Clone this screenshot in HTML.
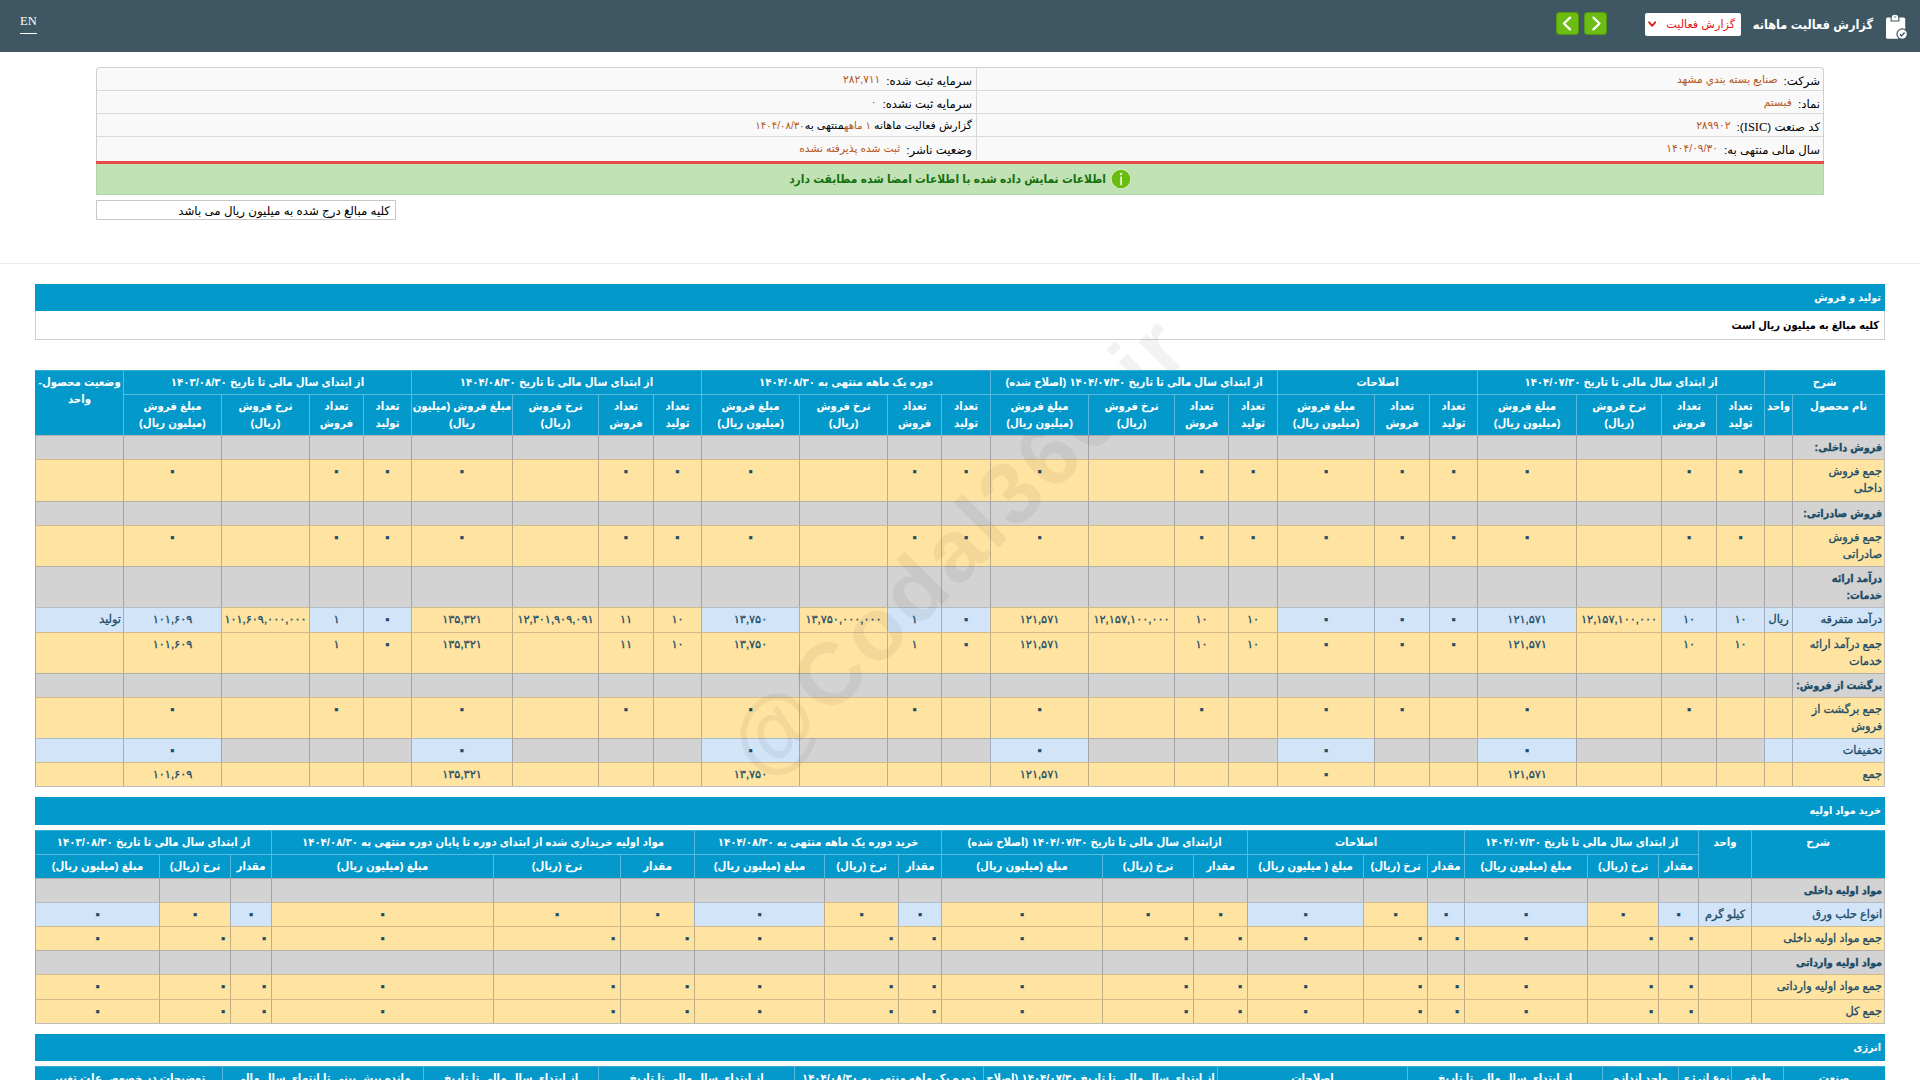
<!DOCTYPE html>
<html lang="fa">
<head>
<meta charset="utf-8">
<title>گزارش فعالیت ماهانه</title>
<style>
*{box-sizing:border-box}
html,body{margin:0;padding:0}
body{width:1920px;height:1080px;overflow:hidden;background:#fff;position:relative;font-family:"Liberation Sans","DejaVu Sans",sans-serif;font-size:11px;color:#000}
.abs{position:absolute}
#top{left:0;top:0;width:1920px;height:52px;background:#3e5763}
#en{left:20px;top:14px;color:#fff;font-family:"Liberation Serif","DejaVu Serif",serif;font-size:12.5px;line-height:15px;padding-bottom:4px;border-bottom:1px solid #fff}
#title{right:47px;top:13px;height:24px;line-height:24px;color:#fff;font-weight:bold;font-size:12.6px;font-family:"Liberation Sans","DejaVu Sans Condensed","DejaVu Sans",sans-serif;white-space:nowrap;direction:rtl}
#sel{left:1645px;top:13px;width:96px;height:23px;background:#fff;border-radius:2px;color:#e81313;font-size:11.2px;line-height:22px;direction:rtl;padding-right:6px;white-space:nowrap}
.nav{top:12px;width:23px;height:23px;background:#6bbd14;border-radius:4px;box-shadow:inset 0 0 0 1px rgba(50,110,10,0.45)}
#info{left:96px;top:67px;width:1728px;height:95px;border:1px solid #cfcfcf;border-bottom:none;border-radius:4px 4px 0 0;background:#f9f9f9}
.irow{position:absolute;left:0;width:1726px;height:23px;border-bottom:1px solid #d9d9d9;direction:rtl;font-size:11.7px;line-height:22px;white-space:nowrap}
.irow .c{position:absolute;top:0;height:22px}
.irow .c1{right:3px}
.irow .c2{right:851px}
.v{color:#b4561d;font-size:10.7px;margin-right:6px}
.k{position:relative;top:1.5px}
.lat{font-family:"Liberation Serif",serif;font-size:12.5px}
#mid{left:976px;top:68px;width:1px;height:92px;background:#d9d9d9}
#red{left:96px;top:161px;width:1728px;height:3px;background:#e8494b}
#green{left:96px;top:164px;width:1728px;height:31px;background:#c1e2b5;border:1px solid #b5d3a9;border-top:none;direction:rtl;text-align:center;color:#15700f;font-weight:bold;font-size:11.9px;font-family:"Liberation Sans","DejaVu Sans Condensed","DejaVu Sans",sans-serif;line-height:30px;white-space:nowrap}
#inp{left:96px;top:200px;width:300px;height:20px;border:1px solid #c8c8c8;background:#fff;direction:rtl;font-size:11.8px;line-height:20px;padding-right:5px;white-space:nowrap}
#sep{left:0;top:263px;width:1920px;height:1px;background:#ececec}
.bar{left:35px;width:1850px;background:#0399cb;color:#fff;font-weight:bold;font-size:10.8px;font-family:"Liberation Sans","DejaVu Sans Condensed","DejaVu Sans",sans-serif;direction:rtl;padding-right:4px;white-space:nowrap}
#note{left:35px;top:311px;width:1850px;height:29px;border:1px solid #d0d0d0;border-top:none;background:#fff;direction:rtl;font-weight:bold;font-size:11px;font-family:"Liberation Sans","DejaVu Sans Condensed","DejaVu Sans",sans-serif;line-height:28px;padding-right:5px;white-space:nowrap}
table.grid{position:absolute;left:35px;width:1850px;table-layout:fixed;border-collapse:separate;border-spacing:0;border-bottom:1px solid #bdbdbd;color:#1b4b66;font-size:11.3px;line-height:17px}
table.grid th,table.grid td{padding:3px 2px 0 2px;vertical-align:top;text-align:center;border-left:1px solid rgba(70,70,85,0.34);border-top:1px solid rgba(90,80,70,0.27);overflow:hidden;font-weight:normal;white-space:nowrap}
table.grid th{position:relative;z-index:2;background:#0399cb;color:#fff;font-weight:bold;font-size:11.3px;font-family:"Liberation Sans","DejaVu Sans Condensed","DejaVu Sans",sans-serif;border-left-color:#56bbdf;border-top-color:#56bbdf;padding:3px 0 0 0}
table.grid thead tr:first-child th{border-top-color:#35aed9}
table.grid th.lastc{border-left-color:#0399cb}
table.grid td:first-child{border-right:1px solid #bdbdbd}
table.grid th.firstc{border-right:1px solid #0399cb}
table.grid td{-webkit-text-stroke:0.3px #1b4b66}
table.grid tr.y td{background:#ffe3a1}
table.grid tr.g td{background:#d3d3d3}
table.grid tr td.l{background:#d2e4f7}
table.grid td.n{text-align:right;padding-right:2px}
table.grid td.b{font-weight:bold;font-size:10.8px;font-family:"Liberation Sans","DejaVu Sans Condensed","DejaVu Sans",sans-serif}
table.grid td.r{text-align:right;padding-right:2px}
table.grid .np{padding-left:0;padding-right:0}
table.grid td.z{font-weight:bold;font-size:16px;line-height:15px}
#wm{left:958px;top:546px;width:0;height:0;z-index:1}
#wm span{position:absolute;left:-450px;top:-60px;width:900px;height:120px;line-height:120px;text-align:center;font-family:"Liberation Sans",sans-serif;font-weight:bold;font-size:88px;letter-spacing:4px;color:rgba(0,0,0,0.05);transform:rotate(-45deg);white-space:nowrap}
</style>
</head>
<body>
<div id="top" class="abs">
<div id="en" class="abs">EN</div>
<div class="nav abs" style="left:1556px"><svg width="23" height="23" viewBox="0 0 23 23"><path d="M14 5.6 L7.9 11.5 L14 17.4" fill="none" stroke="#fff" stroke-width="2.2" stroke-linecap="round" stroke-linejoin="round"/></svg></div>
<div class="nav abs" style="left:1584px"><svg width="23" height="23" viewBox="0 0 23 23"><path d="M9.4 5.6 L15.5 11.5 L9.4 17.4" fill="none" stroke="#fff" stroke-width="2.2" stroke-linecap="round" stroke-linejoin="round"/></svg></div>
<div id="sel" class="abs">گزارش فعالیت<svg class="abs" style="left:3px;top:8px" width="9" height="7" viewBox="0 0 9 7"><path d="M1.2 1.3 L4.2 4.8 L7.2 1.3" fill="none" stroke="#e0201c" stroke-width="1.9" stroke-linecap="round" stroke-linejoin="round"/></svg></div>
<div id="title" class="abs">گزارش فعالیت ماهانه</div>
<svg class="abs" style="left:1884px;top:13px" width="28" height="30" viewBox="0 0 28 30"><rect x="2" y="4.6" width="19.2" height="21.2" rx="1.6" fill="#fff"/><path d="M7.1 8 V5.2 a3.9 3.9 0 0 1 7.8 0 V8 z" fill="#fff" stroke="#3e5763" stroke-width="1.1"/><circle cx="11" cy="3.9" r="0.75" fill="#3e5763"/><circle cx="18.2" cy="21.1" r="5.8" fill="#3e5763"/><circle cx="18.2" cy="21.1" r="4.6" fill="#fff"/><path d="M15.9 21.3 l1.6 1.6 l3.1-3.3" fill="none" stroke="#3e5763" stroke-width="1.4"/></svg>
</div>
<div id="info" class="abs">
<div class="irow" style="top:0px">
<div class="c c1"><span class="k">شرکت:</span><span class="v">صنایع بسته بندي مشهد</span></div>
<div class="c c2"><span class="k">سرمایه ثبت شده:</span><span class="v">۲۸۲,۷۱۱</span></div>
</div>
<div class="irow" style="top:23px">
<div class="c c1"><span class="k">نماد:</span><span class="v">فبستم</span></div>
<div class="c c2"><span class="k">سرمایه ثبت نشده:</span><span class="v">۰</span></div>
</div>
<div class="irow" style="top:46px">
<div class="c c1"><span class="k">کد صنعت (<span class="lat">ISIC</span>):</span><span class="v">۲۸۹۹۰۲</span></div>
<div class="c c2" style="font-size:11px"><span>گزارش فعالیت ماهانه </span><span class="v" style="margin:0;font-size:10.2px">۱ ماهه</span><span>منتهی به</span><span class="v" style="margin:0;font-size:10.2px">۱۴۰۴/۰۸/۳۰</span></div>
</div>
<div class="irow" style="top:69px;border-bottom:none">
<div class="c c1"><span class="k">سال مالی منتهی به:</span><span class="v">۱۴۰۴/۰۹/۳۰</span></div>
<div class="c c2"><span class="k">وضعیت ناشر:</span><span class="v">ثبت شده پذیرفته نشده</span></div>
</div>
</div>
<div id="mid" class="abs"></div>
<div id="red" class="abs"></div>
<div id="green" class="abs"><svg style="vertical-align:middle;margin-left:5px;position:relative;top:-1px" width="20" height="20" viewBox="0 0 20 20"><circle cx="10" cy="10" r="10" fill="#d9f3c4"/><circle cx="10" cy="10" r="9.3" fill="#69bd12"/><rect x="9.2" y="7.6" width="1.8" height="8.6" rx="0.6" fill="#e2f7cc"/><circle cx="10.1" cy="5" r="1.2" fill="#e2f7cc"/></svg>اطلاعات نمایش داده شده با اطلاعات امضا شده مطابقت دارد</div>
<div id="inp" class="abs">کلیه مبالغ درج شده به میلیون ریال می باشد</div>
<div id="sep" class="abs"></div>
<div class="bar abs" style="top:284px;height:27px;line-height:26px">تولید و فروش</div>
<div id="note" class="abs">کلیه مبالغ به میلیون ریال است</div>
<table class="grid" id="t1" dir="rtl" style="top:370px">
<colgroup><col style="width:93px"><col style="width:28px"><col style="width:48px"><col style="width:55px"><col style="width:85px"><col style="width:99px"><col style="width:48px"><col style="width:55px"><col style="width:97px"><col style="width:49px"><col style="width:54px"><col style="width:86px"><col style="width:98px"><col style="width:49px"><col style="width:54px"><col style="width:88px"><col style="width:98px"><col style="width:48px"><col style="width:55px"><col style="width:86px"><col style="width:101px"><col style="width:48px"><col style="width:54px"><col style="width:88px"><col style="width:98px"><col style="width:88px"></colgroup>
<thead>
<tr style="height:24px"><th colspan="2" class="firstc">شرح</th><th colspan="4">از ابتدای سال مالی تا تاریخ ۱۴۰۴/۰۷/۳۰</th><th colspan="3">اصلاحات</th><th colspan="4">از ابتدای سال مالی تا تاریخ ۱۴۰۴/۰۷/۳۰ (اصلاح شده)</th><th colspan="4">دوره یک ماهه منتهی به ۱۴۰۴/۰۸/۳۰</th><th colspan="4">از ابتدای سال مالی تا تاریخ ۱۴۰۴/۰۸/۳۰</th><th colspan="4">از ابتدای سال مالی تا تاریخ ۱۴۰۳/۰۸/۳۰</th><th rowspan="2" class="lastc">وضعیت محصول-<br>واحد</th></tr>
<tr style="height:41px"><th class="firstc">نام محصول</th><th class="np">واحد</th><th>تعداد<br>تولید</th><th>تعداد<br>فروش</th><th>نرخ فروش<br>(ریال)</th><th>مبلغ فروش<br>(میلیون ریال)</th><th>تعداد<br>تولید</th><th>تعداد<br>فروش</th><th>مبلغ فروش<br>(میلیون ریال)</th><th>تعداد<br>تولید</th><th>تعداد<br>فروش</th><th>نرخ فروش<br>(ریال)</th><th>مبلغ فروش<br>(میلیون ریال)</th><th>تعداد<br>تولید</th><th>تعداد<br>فروش</th><th>نرخ فروش<br>(ریال)</th><th>مبلغ فروش<br>(میلیون ریال)</th><th>تعداد<br>تولید</th><th>تعداد<br>فروش</th><th>نرخ فروش<br>(ریال)</th><th>مبلغ فروش (میلیون<br>ریال)</th><th>تعداد<br>تولید</th><th>تعداد<br>فروش</th><th>نرخ فروش<br>(ریال)</th><th>مبلغ فروش<br>(میلیون ریال)</th></tr>
</thead><tbody>
<tr class="g" style="height:24px"><td class="n b">فروش داخلی:</td><td></td><td></td><td></td><td></td><td></td><td></td><td></td><td></td><td></td><td></td><td></td><td></td><td></td><td></td><td></td><td></td><td></td><td></td><td></td><td></td><td></td><td></td><td></td><td></td><td></td></tr>
<tr class="y" style="height:42px"><td class="n">جمع فروش<br>داخلی</td><td></td><td class="z">۰</td><td class="z">۰</td><td></td><td class="z">۰</td><td class="z">۰</td><td class="z">۰</td><td class="z">۰</td><td class="z">۰</td><td class="z">۰</td><td></td><td class="z">۰</td><td class="z">۰</td><td class="z">۰</td><td></td><td class="z">۰</td><td class="z">۰</td><td class="z">۰</td><td></td><td class="z">۰</td><td class="z">۰</td><td class="z">۰</td><td></td><td class="z">۰</td><td></td></tr>
<tr class="g" style="height:24px"><td class="n b">فروش صادراتی:</td><td></td><td></td><td></td><td></td><td></td><td></td><td></td><td></td><td></td><td></td><td></td><td></td><td></td><td></td><td></td><td></td><td></td><td></td><td></td><td></td><td></td><td></td><td></td><td></td><td></td></tr>
<tr class="y" style="height:41px"><td class="n">جمع فروش<br>صادراتی</td><td></td><td class="z">۰</td><td class="z">۰</td><td></td><td class="z">۰</td><td class="z">۰</td><td class="z">۰</td><td class="z">۰</td><td class="z">۰</td><td class="z">۰</td><td></td><td class="z">۰</td><td class="z">۰</td><td class="z">۰</td><td></td><td class="z">۰</td><td class="z">۰</td><td class="z">۰</td><td></td><td class="z">۰</td><td class="z">۰</td><td class="z">۰</td><td></td><td class="z">۰</td><td></td></tr>
<tr class="g" style="height:41px"><td class="n b">درآمد ارائه<br>خدمات:</td><td></td><td></td><td></td><td></td><td></td><td></td><td></td><td></td><td></td><td></td><td></td><td></td><td></td><td></td><td></td><td></td><td></td><td></td><td></td><td></td><td></td><td></td><td></td><td></td><td></td></tr>
<tr class="y" style="height:25px"><td class="n l">درآمد متفرقه</td><td class="l np">ریال</td><td class="l">۱۰</td><td class="l">۱۰</td><td>۱۲,۱۵۷,۱۰۰,۰۰۰</td><td class="l">۱۲۱,۵۷۱</td><td class="l z">۰</td><td class="l z">۰</td><td class="l z">۰</td><td>۱۰</td><td>۱۰</td><td>۱۲,۱۵۷,۱۰۰,۰۰۰</td><td>۱۲۱,۵۷۱</td><td class="l z">۰</td><td class="l">۱</td><td>۱۳,۷۵۰,۰۰۰,۰۰۰</td><td class="l">۱۳,۷۵۰</td><td>۱۰</td><td>۱۱</td><td>۱۲,۳۰۱,۹۰۹,۰۹۱</td><td>۱۳۵,۳۲۱</td><td class="l z">۰</td><td class="l">۱</td><td>۱۰۱,۶۰۹,۰۰۰,۰۰۰</td><td class="l">۱۰۱,۶۰۹</td><td class="l n">تولید</td></tr>
<tr class="y" style="height:41px"><td class="n">جمع درآمد ارائه<br>خدمات</td><td></td><td>۱۰</td><td>۱۰</td><td></td><td>۱۲۱,۵۷۱</td><td class="z">۰</td><td class="z">۰</td><td class="z">۰</td><td>۱۰</td><td>۱۰</td><td></td><td>۱۲۱,۵۷۱</td><td class="z">۰</td><td>۱</td><td></td><td>۱۳,۷۵۰</td><td>۱۰</td><td>۱۱</td><td></td><td>۱۳۵,۳۲۱</td><td class="z">۰</td><td>۱</td><td></td><td>۱۰۱,۶۰۹</td><td></td></tr>
<tr class="g" style="height:24px"><td class="n b">برگشت از فروش:</td><td></td><td></td><td></td><td></td><td></td><td></td><td></td><td></td><td></td><td></td><td></td><td></td><td></td><td></td><td></td><td></td><td></td><td></td><td></td><td></td><td></td><td></td><td></td><td></td><td></td></tr>
<tr class="y" style="height:41px"><td class="n">جمع برگشت از<br>فروش</td><td></td><td></td><td class="z">۰</td><td></td><td class="z">۰</td><td></td><td class="z">۰</td><td class="z">۰</td><td></td><td class="z">۰</td><td></td><td class="z">۰</td><td></td><td class="z">۰</td><td></td><td class="z">۰</td><td></td><td class="z">۰</td><td></td><td class="z">۰</td><td></td><td class="z">۰</td><td></td><td class="z">۰</td><td></td></tr>
<tr class="g" style="height:24px"><td class="n l">تخفیفات</td><td class="l"></td><td></td><td></td><td></td><td class="l z">۰</td><td></td><td></td><td class="l z">۰</td><td></td><td></td><td></td><td class="l z">۰</td><td></td><td></td><td></td><td class="l z">۰</td><td></td><td></td><td></td><td class="l z">۰</td><td></td><td></td><td></td><td class="l z">۰</td><td class="l"></td></tr>
<tr class="y" style="height:24px"><td class="n">جمع</td><td></td><td></td><td></td><td></td><td>۱۲۱,۵۷۱</td><td></td><td></td><td class="z">۰</td><td></td><td></td><td></td><td>۱۲۱,۵۷۱</td><td></td><td></td><td></td><td>۱۳,۷۵۰</td><td></td><td></td><td></td><td>۱۳۵,۳۲۱</td><td></td><td></td><td></td><td>۱۰۱,۶۰۹</td><td></td></tr>
</tbody></table>
<div class="bar abs" style="top:797px;height:28px;line-height:27px">خرید مواد اولیه</div>
<table class="grid" id="t2" dir="rtl" style="top:830px">
<colgroup><col style="width:134px"><col style="width:53px"><col style="width:40px"><col style="width:71px"><col style="width:123px"><col style="width:37px"><col style="width:64px"><col style="width:116px"><col style="width:54px"><col style="width:91px"><col style="width:161px"><col style="width:43px"><col style="width:74px"><col style="width:130px"><col style="width:74px"><col style="width:127px"><col style="width:222px"><col style="width:41px"><col style="width:71px"><col style="width:124px"></colgroup>
<thead>
<tr style="height:24px"><th rowspan="2" class="firstc">شرح</th><th rowspan="2">واحد</th><th colspan="3">از ابتدای سال مالی تا تاریخ ۱۴۰۴/۰۷/۳۰</th><th colspan="3">اصلاحات</th><th colspan="3">ازابتدای سال مالی تا تاریخ ۱۴۰۴/۰۷/۳۰ (اصلاح شده)</th><th colspan="3">خرید دوره یک ماهه منتهی به ۱۴۰۴/۰۸/۳۰</th><th colspan="3">مواد اولیه خریداری شده از ابتدای دوره تا پایان دوره منتهی به ۱۴۰۴/۰۸/۳۰</th><th colspan="3" class="lastc">از ابتدای سال مالی تا تاریخ ۱۴۰۳/۰۸/۳۰</th></tr>
<tr style="height:24px"><th>مقدار</th><th>نرخ (ریال)</th><th>مبلغ (میلیون ریال)</th><th>مقدار</th><th>نرخ (ریال)</th><th>مبلغ ( میلیون ریال)</th><th>مقدار</th><th>نرخ (ریال)</th><th>مبلغ (میلیون ریال)</th><th>مقدار</th><th>نرخ (ریال)</th><th>مبلغ (میلیون ریال)</th><th>مقدار</th><th>نرخ (ریال)</th><th>مبلغ (میلیون ریال)</th><th>مقدار</th><th>نرخ (ریال)</th><th class="lastc">مبلغ (میلیون ریال)</th></tr>
</thead><tbody>
<tr class="g" style="height:24px"><td class="n b">مواد اولیه داخلی</td><td></td><td></td><td></td><td></td><td></td><td></td><td></td><td></td><td></td><td></td><td></td><td></td><td></td><td></td><td></td><td></td><td></td><td></td><td></td></tr>
<tr class="y" style="height:24px"><td class="n l">انواع حلب ورق</td><td class="l np">کیلو گرم</td><td class="l z">۰</td><td class="z">۰</td><td class="l z">۰</td><td class="l z">۰</td><td class="z">۰</td><td class="l z">۰</td><td class="z">۰</td><td class="z">۰</td><td class="z">۰</td><td class="l z">۰</td><td class="z">۰</td><td class="l z">۰</td><td class="z">۰</td><td class="z">۰</td><td class="z">۰</td><td class="l z">۰</td><td class="z">۰</td><td class="l z">۰</td></tr>
<tr class="y" style="height:24px"><td class="n">جمع مواد اولیه داخلی</td><td></td><td class="r z">۰</td><td class="r z">۰</td><td class="z">۰</td><td class="r z">۰</td><td class="r z">۰</td><td class="z">۰</td><td class="r z">۰</td><td class="r z">۰</td><td class="z">۰</td><td class="r z">۰</td><td class="r z">۰</td><td class="z">۰</td><td class="r z">۰</td><td class="r z">۰</td><td class="z">۰</td><td class="r z">۰</td><td class="r z">۰</td><td class="z">۰</td></tr>
<tr class="g" style="height:24px"><td class="n b">مواد اولیه وارداتی</td><td></td><td></td><td></td><td></td><td></td><td></td><td></td><td></td><td></td><td></td><td></td><td></td><td></td><td></td><td></td><td></td><td></td><td></td><td></td></tr>
<tr class="y" style="height:25px"><td class="n">جمع مواد اولیه وارداتی</td><td></td><td class="r z">۰</td><td class="r z">۰</td><td class="z">۰</td><td class="r z">۰</td><td class="r z">۰</td><td class="z">۰</td><td class="r z">۰</td><td class="r z">۰</td><td class="z">۰</td><td class="r z">۰</td><td class="r z">۰</td><td class="z">۰</td><td class="r z">۰</td><td class="r z">۰</td><td class="z">۰</td><td class="r z">۰</td><td class="r z">۰</td><td class="z">۰</td></tr>
<tr class="y" style="height:24px"><td class="n">جمع کل</td><td></td><td class="r z">۰</td><td class="r z">۰</td><td class="z">۰</td><td class="r z">۰</td><td class="r z">۰</td><td class="z">۰</td><td class="r z">۰</td><td class="r z">۰</td><td class="z">۰</td><td class="r z">۰</td><td class="r z">۰</td><td class="z">۰</td><td class="r z">۰</td><td class="r z">۰</td><td class="z">۰</td><td class="r z">۰</td><td class="r z">۰</td><td class="z">۰</td></tr>
</tbody></table>
<div class="bar abs" style="top:1034px;height:27px;line-height:26px">انرژی</div>
<table class="grid" id="t3" dir="rtl" style="top:1066px">
<colgroup><col style="width:102px"><col style="width:52px"><col style="width:53px"><col style="width:76px"><col style="width:195px"><col style="width:190px"><col style="width:234px"><col style="width:189px"><col style="width:196px"><col style="width:175px"><col style="width:201px"><col style="width:187px"></colgroup>
<thead><tr style="height:41px"><th class="firstc">صنعت</th><th>طبقه</th><th>نوع انرژی</th><th>واحد اندازه<br>گیری</th><th>از ابتدای سال مالی تا تاریخ<br>۱۴۰۴/۰۷/۳۰</th><th>اصلاحات</th><th>از ابتدای سال مالی تا تاریخ ۱۴۰۴/۰۷/۳۰ (اصلاح<br>شده)</th><th>دوره یک ماهه منتهی به ۱۴۰۴/۰۸/۳۰</th><th>از ابتدای سال مالی تا تاریخ<br>۱۴۰۴/۰۸/۳۰</th><th>از ابتدای سال مالی تا تاریخ<br>۱۴۰۳/۰۸/۳۰</th><th>مانده پیش بینی تا انتهای سال مالی</th><th class="lastc">توضیحات در خصوص علت تغییر</th></tr></thead>
</table>
<div id="wm" class="abs"><span>@Codal360.ir</span></div>
</body>
</html>
